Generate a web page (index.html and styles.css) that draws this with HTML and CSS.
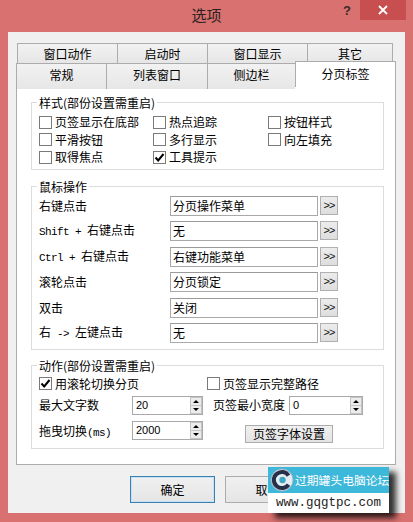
FILE: index.html
```html
<!DOCTYPE html>
<html lang="zh-CN">
<head>
<meta charset="utf-8">
<title>选项</title>
<link rel="stylesheet" href="styles.css">
</head>
<body>
<div class="window">
  <div class="titlebar">
    <div></div>
    <div class="title">选项</div>
    <div class="tb-right">
      <div class="help">?</div>
      <div class="close"><svg width="10" height="10" viewBox="0 0 10 10"><path d="M1 1L9 9M9 1L1 9" stroke="#fff" stroke-width="1.8"/></svg></div>
    </div>
  </div>
  <div class="client">
    <div class="tabs">
      <div class="tabrow row1">
        <div class="tab">窗口动作</div>
        <div class="tab">启动时</div>
        <div class="tab">窗口显示</div>
        <div class="tab">其它</div>
      </div>
      <div class="tabrow row2">
        <div class="tab">常规</div>
        <div class="tab">列表窗口</div>
        <div class="tab">侧边栏</div>
        <div class="tab sel">分页标签</div>
      </div>
      <div class="panel">
        <div class="group g1">
          <div class="legend">样式(部份设置需重启)</div>
          <div class="cbgrid">
            <div class="cbitem"><span class="cb"></span>页签显示在底部</div>
            <div class="cbitem"><span class="cb"></span>热点追踪</div>
            <div class="cbitem"><span class="cb"></span>按钮样式</div>
            <div class="cbitem"><span class="cb"></span>平滑按钮</div>
            <div class="cbitem"><span class="cb"></span>多行显示</div>
            <div class="cbitem"><span class="cb"></span>向左填充</div>
            <div class="cbitem"><span class="cb"></span>取得焦点</div>
            <div class="cbitem"><span class="cb on"><svg width="11" height="11" viewBox="0 0 11 11"><path d="M1.5 5.5L4.2 8.4L9.5 2" fill="none" stroke="#000" stroke-width="2"/></svg></span>工具提示</div>
          </div>
        </div>
        <div class="group g2">
          <div class="legend">鼠标操作</div>
          <div class="mgrid">
            <div class="lbl">右键点击</div><div class="inp">分页操作菜单</div><div class="more">&gt;&gt;</div>
            <div class="lbl"><span class="m">Shift + </span>右键点击</div><div class="inp">无</div><div class="more">&gt;&gt;</div>
            <div class="lbl"><span class="m">Ctrl + </span>右键点击</div><div class="inp">右键功能菜单</div><div class="more">&gt;&gt;</div>
            <div class="lbl">滚轮点击</div><div class="inp">分页锁定</div><div class="more">&gt;&gt;</div>
            <div class="lbl">双击</div><div class="inp">关闭</div><div class="more">&gt;&gt;</div>
            <div class="lbl">右<span class="m"> -&gt; </span>左键点击</div><div class="inp">无</div><div class="more">&gt;&gt;</div>
          </div>
        </div>
        <div class="group g3">
          <div class="legend">动作(部份设置需重启)</div>
          <div class="arow r1">
            <div class="cbitem w168"><span class="cb on"><svg width="11" height="11" viewBox="0 0 11 11"><path d="M1.5 5.5L4.2 8.4L9.5 2" fill="none" stroke="#000" stroke-width="2"/></svg></span>用滚轮切换分页</div>
            <div class="cbitem"><span class="cb"></span>页签显示完整路径</div>
          </div>
          <div class="arow r2">
            <div class="alabel">最大文字数</div>
            <div class="spin s71"><div class="val">20</div><div class="arrows"><div class="up"></div><div class="dn"></div></div></div>
            <div class="alabel2">页签最小宽度</div>
            <div class="spin s74"><div class="val">0</div><div class="arrows"><div class="up"></div><div class="dn"></div></div></div>
          </div>
          <div class="arow r3">
            <div class="alabel">拖曳切换<span class="m">(ms)</span></div>
            <div class="spin s71"><div class="val">2000</div><div class="arrows"><div class="up"></div><div class="dn"></div></div></div>
            <div class="fontbtn">页签字体设置</div>
          </div>
        </div>
      </div>
    </div>
    <div class="buttons">
      <div class="btn def">确定</div>
      <div class="btn">取消</div>
    </div>
  </div>
  <div class="wm">
    <div class="wm-top">
      <svg class="logo" width="24" height="24" viewBox="0 0 24 24">
        <circle cx="12" cy="12" r="11" fill="#e6edf2"/>
        <circle cx="12" cy="12" r="11" fill="none" stroke="#9fb3c2" stroke-width="1"/>
        <path d="M18.5 7.5A8 8 0 1 0 18.5 16.5" fill="none" stroke="#26304a" stroke-width="4"/>
        <circle cx="12.5" cy="12" r="3.2" fill="#3aa6c8"/>
      </svg>
      <span class="wm-name">过期罐头电脑论坛</span>
    </div>
    <div class="wm-bot">www.gqgtpc.com</div>
  </div>
</div>
</body>
</html>
```
FILE: styles.css
```css
* { box-sizing: border-box; margin: 0; padding: 0; }
html, body { width: 413px; height: 522px; overflow: hidden; }
body {
  background: #d87170;
  font: 12px/14px "Noto Sans CJK SC", "Liberation Sans", sans-serif;
  color: #000;
}
.window {
  position: relative;
  height: 522px;
  padding: 0 8px 9px;
  display: flex;
  flex-direction: column;
}
.titlebar {
  height: 32px;
  display: grid;
  grid-template-columns: 1fr auto 1fr;
}
.title {
  font-size: 15px;
  line-height: 30px;
  color: #2a2020;
}
.tb-right {
  display: flex;
  justify-content: flex-end;
  align-items: flex-start;
}
.help {
  width: 26px;
  height: 20px;
  text-align: center;
  font: bold 13px/22px "Liberation Sans", sans-serif;
  color: #3a2a2a;
}
.close {
  width: 46px;
  height: 20px;
  margin-right: -1px;
  background: #c74f4f;
  display: flex;
  align-items: center;
  justify-content: center;
}
.client {
  flex: 1;
  background: #f0f0f0;
  padding: 11px 0 0 8px;
}
.tabs { width: 380px; }
.tabrow { display: grid; }
.row1 {
  grid-template-columns: 100px 90px 100px 86px;
  height: 20px;
  margin-left: 1px;
}
.row2 {
  grid-template-columns: 90px 101px 88px 101px;
  height: 23px;
}
.tab {
  border: 1px solid #acacac;
  border-bottom: none;
  border-right: none;
  background: linear-gradient(#f2f2f2, #e6e6e6);
  text-align: center;
  line-height: 19px;
}
.row2 .tab { line-height: 22px; }
.tab:last-child { border-right: 1px solid #acacac; }
.row2 .tab.sel {
  position: relative;
  top: -2px;
  height: 26px;
  z-index: 1;
  background: #fff;
  line-height: 23px;
}
.panel {
  height: 379px;
  border: 1px solid #acacac;
  background: #fff;
  padding: 15px 11px 0 14px;
}
.group {
  border: 1px solid #dcdcdc;
  padding: 0 0 0 7px;
}
.legend {
  margin: -7px 0 0 -2px;
  padding: 0 2px;
  width: max-content;
  height: 14px;
  line-height: 14px;
  background: #fff;
}
.g1 { padding-bottom: 3px; }
.cbgrid {
  margin-top: 3.5px;
  display: grid;
  grid-template-columns: 114px 115px 1fr;
  grid-auto-rows: 17.5px;
}
.cbitem {
  display: flex;
  align-items: center;
  gap: 3px;
  white-space: nowrap;
}
.cb {
  width: 13px;
  height: 13px;
  border: 1px solid #7a7a7a;
  background: #fff;
  flex: none;
  display: flex;
  align-items: center;
  justify-content: center;
}
.g2 { margin-top: 16px; padding-bottom: 6px; }
.mgrid {
  margin-top: 2px;
  display: grid;
  grid-template-columns: 131px 148px 20px;
  grid-auto-rows: 20px;
  row-gap: 5.4px;
  align-items: center;
}
.lbl { white-space: nowrap; }
.m {
  font-family: "Liberation Mono", monospace;
  font-size: 11px;
  letter-spacing: -0.6px;
}
.inp {
  height: 20px;
  border: 1px solid #a9a9a9;
  border-top-color: #9a9a9a;
  padding-left: 2px;
  line-height: 18px;
  background: #fff;
}
.more {
  justify-self: end;
  align-self: start;
  width: 18px;
  height: 19px;
  border: 1px solid #b0b0b0;
  background: linear-gradient(#ececec, #dedede);
  font: 11px/17px "Liberation Sans", sans-serif;
  text-align: center;
  letter-spacing: -1px;
  color: #111;
}
.g3 { margin-top: 15px; padding-bottom: 5px; }
.arow { display: flex; align-items: center; }
.r1 { margin-top: 3px; height: 16px; }
.r2 { margin-top: 4px; height: 19px; }
.r3 { margin-top: 6px; height: 22px; }
.w168 { width: 168px; }
.alabel { width: 93px; white-space: nowrap; }
.alabel2 { width: 76px; margin-left: 10px; white-space: nowrap; }
.r3 .spin { align-self: flex-start; }
.spin {
  height: 19px;
  border: 1px solid #a9a9a9;
  background: #fff;
  display: flex;
}
.s71 { width: 71px; }
.s74 { width: 74px; }
.val {
  flex: 1;
  padding-left: 3px;
  font: 11px/17px "Liberation Sans", sans-serif;
}
.arrows {
  width: 12px;
  display: flex;
  flex-direction: column;
}
.up, .dn {
  flex: 1;
  background: #ececec;
  border: 1px solid #c4c4c4;
  display: flex;
  align-items: center;
  justify-content: center;
}
.dn { border-top: none; }
.up::after, .dn::after {
  content: "";
  border-left: 3px solid transparent;
  border-right: 3px solid transparent;
}
.up::after { border-bottom: 3px solid #000; }
.dn::after { border-top: 3px solid #000; }
.fontbtn {
  align-self: flex-end;
  margin-left: 42px;
  width: 88px;
  height: 18px;
  border: 1px solid #acacac;
  background: linear-gradient(#f0f0f0, #e3e3e3);
  text-align: center;
  line-height: 16px;
}
.buttons {
  margin-top: 11px;
  padding-left: 114px;
  display: flex;
  gap: 10px;
}
.btn {
  width: 85px;
  height: 27px;
  border: 1px solid #acacac;
  background: linear-gradient(#f0f0f0, #e5e5e5);
  text-align: center;
  line-height: 25px;
}
.btn.def {
  border-color: #3c7fb1;
  box-shadow: inset 0 0 0 1px #c8e2f5;
}
.wm {
  position: absolute;
  left: 268px;
  top: 467px;
  width: 121px;
  box-shadow: 7px 5px 6px rgba(0, 0, 0, 0.8);
}
.wm-top {
  height: 26px;
  background: #3db7da;
  display: flex;
  align-items: center;
  padding-left: 2px;
  gap: 1px;
  color: #fff;
}
.logo { flex: none; }
.wm-name {
  font-size: 11.8px;
  white-space: nowrap;
}
.wm-bot {
  height: 20px;
  background: #fff;
  padding-left: 8px;
  font: 12.5px/20px "Liberation Mono", monospace;
  color: #222;
  white-space: nowrap;
}
```
